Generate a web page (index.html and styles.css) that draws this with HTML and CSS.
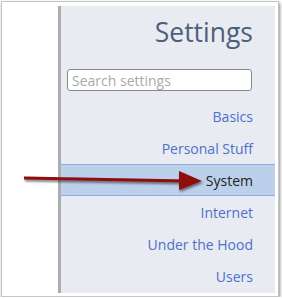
FILE: index.html
```html
<!DOCTYPE html>
<html lang="en">
<head>
  <meta charset="UTF-8" />
  <title>Settings</title>
  <link rel="stylesheet" href="styles.css">
</head>
<body>
  <div class="frame">
    <div class="sidebar">
      <h1>Settings</h1>
      <input class="search" type="text" placeholder="Search settings" />
      <ul class="nav">
        <li><a href="#">Basics</a></li>
        <li><a href="#">Personal Stuff</a></li>
        <li class="selected"><a href="#">System</a></li>
        <li><a href="#">Internet</a></li>
        <li><a href="#">Under the Hood</a></li>
        <li><a href="#">Users</a></li>
      </ul>
    </div>
    <svg class="arrow" width="190" height="34" viewBox="0 0 190 34">
      <defs>
        <filter id="shadow" x="-10%" y="-50%" width="130%" height="250%">
          <feDropShadow dx="1" dy="2" stdDeviation="1.2" flood-color="#000" flood-opacity="0.5"/>
        </filter>
      </defs>
      <g filter="url(#shadow)">
        <line x1="3" y1="14" x2="166" y2="17" stroke="#8e0a0a" stroke-width="3"/>
        <polygon points="158,7 181,17 158,26" fill="#8e0a0a"/>
      </g>
    </svg>
  </div>
</body>
</html>
```

FILE: styles.css
```css
body {
  margin: 0;
  background: #fff;
  font-family: "Open Sans", sans-serif;
}
.frame {
  position: relative;
  margin: 1px 0 0 1px;
  width: 276px;
  height: 294px;
  border: 1px solid #c4c4c4;
  background: #fff;
  box-shadow: 1px 2px 3px rgba(0, 0, 0, 0.45);
}
.sidebar {
  box-sizing: border-box;
  margin: 4px 0 0 56px;
  width: 217px;
  height: 287px;
  background: #e8ebf1;
  border-left: 3px solid #abadb1;
  padding: 0 22px 0 6px;
  text-align: right;
}
h1 {
  margin: 0;
  padding-top: 10px;
  font-size: 26.5px;
  font-weight: normal;
  line-height: 32px;
  color: #4f5e7b;
}
.search {
  box-sizing: border-box;
  display: block;
  margin-top: 21px;
  width: 185px;
  height: 22px;
  padding: 0 4px;
  border: 1px solid #8a8a8a;
  border-radius: 3px;
  font-family: "Open Sans", sans-serif;
  font-size: 14px;
}
.search::placeholder {
  color: #a9a9a9;
}
.nav {
  list-style: none;
  margin: 9px -22px 0 -6px;
  padding: 0;
}
.nav li {
  box-sizing: border-box;
  height: 32px;
  line-height: 30px;
  padding-right: 22px;
  border-top: 1px solid transparent;
  border-bottom: 1px solid transparent;
}
.nav a {
  text-decoration: none;
  color: #4e6fcb;
  font-size: 14px;
}
.nav li.selected {
  background: #bcd0eb;
  border-color: #8eaee3;
}
.nav li.selected a {
  color: #222;
}
.arrow {
  position: absolute;
  left: 19px;
  top: 162px;
}
```
